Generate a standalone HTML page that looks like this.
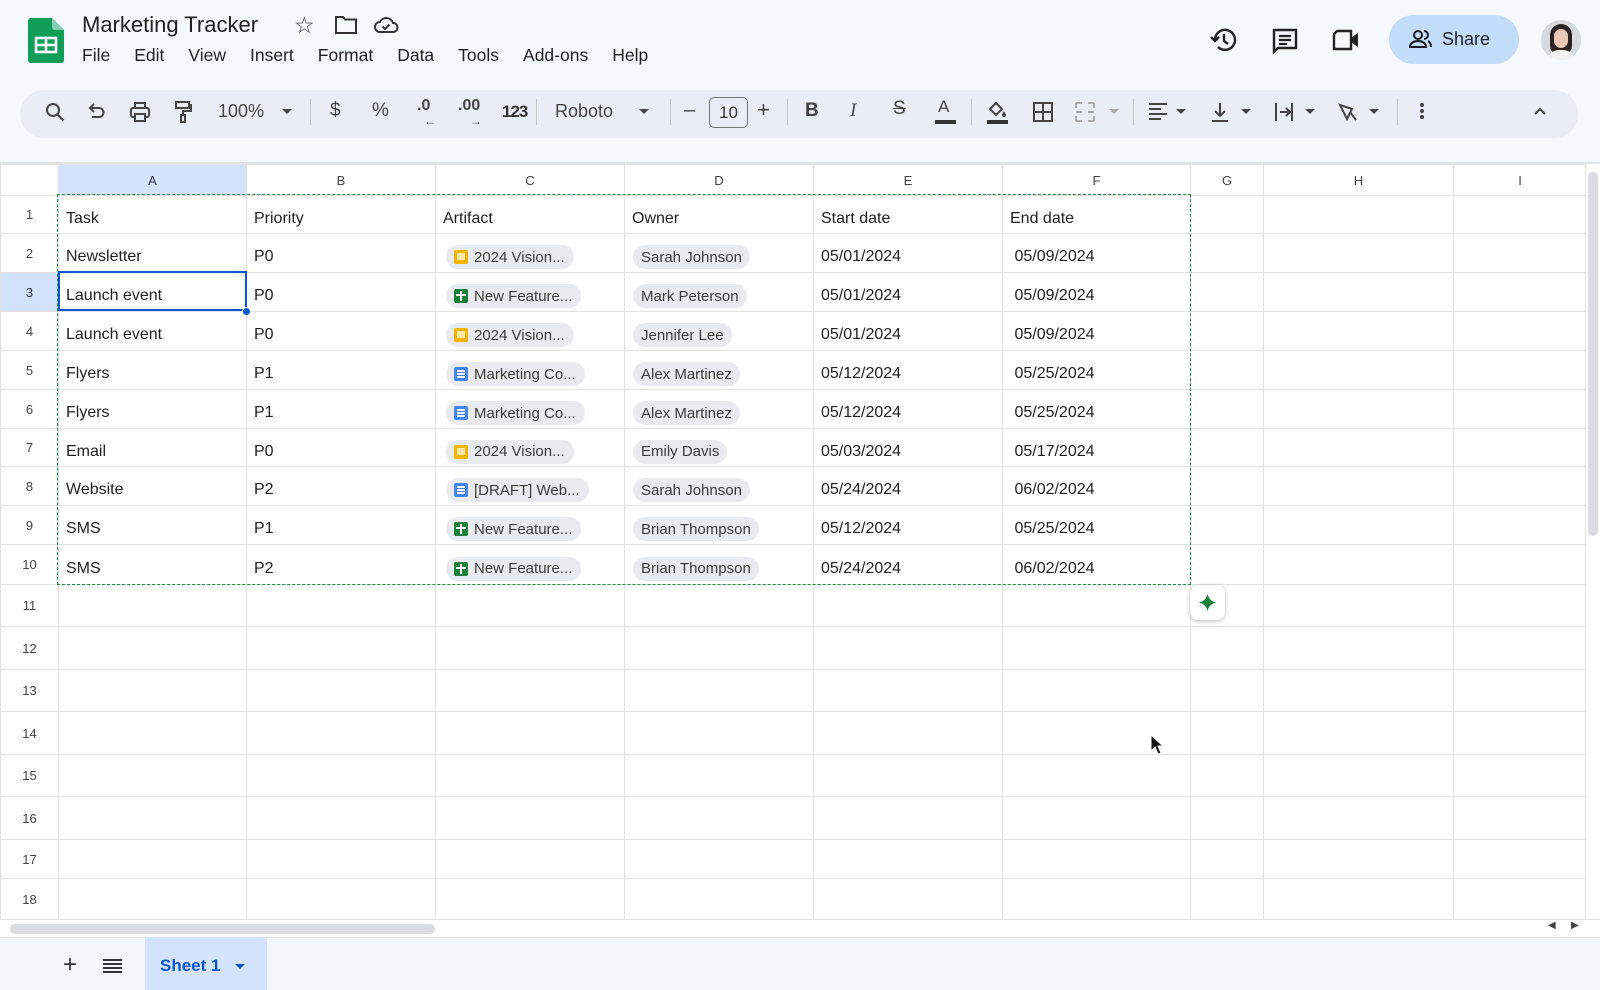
<!DOCTYPE html>
<html><head><meta charset="utf-8">
<style>
*{box-sizing:border-box;margin:0;padding:0}
body{width:1600px;height:990px;overflow:hidden;background:#f5f8fc;font-family:"Liberation Sans",Arial,sans-serif;color:#1f1f1f;position:relative}
.a{position:absolute}
.menu span{margin-right:24px}
.tb{position:absolute;top:90px;left:20px;width:1558px;height:48px;background:#e9eef6;border-radius:24px}
.ic{position:absolute;top:100px;width:24px;height:24px}
.sep{position:absolute;top:99px;width:1px;height:26px;background:#c4c7c5}
.car{position:absolute;top:109px;width:0;height:0;border-left:5px solid transparent;border-right:5px solid transparent;border-top:5px solid #444}
table{position:absolute;left:0;top:164px;border-collapse:collapse;table-layout:fixed;background:#fff}
td{border:1px solid #e1e3e1;font-size:16px;padding:8px 0 0 7px;white-space:nowrap;overflow:hidden;vertical-align:middle}
td.rh{text-align:center;padding:0;font-size:13px;color:#444;background:#fff}
tr.hd td{text-align:center;padding:0;font-size:13px;color:#444;height:31px}
.chip{display:inline-flex;align-items:center;height:24px;background:#e8eaed;border-radius:12px;padding:0 9px 0 8px;font-size:15px;color:#3c3c3c;margin-left:3px}
.chip i{display:inline-block;width:14px;height:14px;border-radius:2px;margin-right:6px;position:relative}
.sl{background:#f4b400}.sl:after{content:"";position:absolute;left:3px;top:3px;width:8px;height:7px;background:#fde9a8}
.sh{background:#188038}.sh:after{content:"";position:absolute;left:6px;top:2px;width:2px;height:10px;background:#fff}.sh:before{content:"";position:absolute;left:2px;top:5px;width:10px;height:2px;background:#fff;z-index:1}
.dc{background:#4285f4}.dc:after{content:"";position:absolute;left:3px;top:3px;width:8px;height:2px;background:#fff;box-shadow:0 3px 0 #fff,0 6px 0 #fff}
.own{display:inline-flex;align-items:center;height:24px;background:#e8eaed;border-radius:12px;padding:0 8px;font-size:15px;color:#3c3c3c;margin-left:1px}
</style></head><body>

<svg class="a" style="left:28px;top:18px" width="36" height="45" viewBox="0 0 36 45"><path d="M3 0h21l12 12v30a3 3 0 0 1-3 3H3a3 3 0 0 1-3-3V3a3 3 0 0 1 3-3z" fill="#0f9d58"/><path d="M24 0l12 12H27a3 3 0 0 1-3-3z" fill="#87ceac"/><rect x="8" y="20" width="20" height="14" fill="none" stroke="#fff" stroke-width="2.6"/><path d="M18 20v14M8 27h20" stroke="#fff" stroke-width="2.6"/></svg>
<div class="a" style="left:82px;top:12px;font-size:22px;color:#1f1f1f">Marketing Tracker</div>
<div class="a" style="left:294px;top:12px;font-size:23px;color:#333">☆</div>
<svg class="a" style="left:334px;top:15px" width="24" height="20" viewBox="0 0 24 20"><path d="M2 2h7l2 2.5h11V18H2z" fill="none" stroke="#333" stroke-width="2"/></svg>
<svg class="a" style="left:373px;top:14px" width="26" height="22" viewBox="0 0 26 22"><path d="M7 18a5 5 0 0 1 0-10 7 7 0 0 1 13 1 4.5 4.5 0 0 1 0 9z" fill="none" stroke="#333" stroke-width="2"/><path d="M9.5 12.5l2.5 2.5 4.5-4.5" fill="none" stroke="#333" stroke-width="2"/></svg>
<div class="a menu" style="left:82px;top:45px;font-size:17.5px;color:#1f1f1f"><span>File</span><span>Edit</span><span>View</span><span>Insert</span><span>Format</span><span>Data</span><span>Tools</span><span>Add-ons</span><span>Help</span></div>

<svg class="a" style="left:1210px;top:26px" width="28" height="28" viewBox="0 0 28 28"><path d="M5 14a10 10 0 1 1 3 7" fill="none" stroke="#222" stroke-width="2.4"/><path d="M1 11l4 4 4-4" fill="none" stroke="#222" stroke-width="2.4"/><path d="M14 8v7l4 3" fill="none" stroke="#222" stroke-width="2.4"/></svg>
<svg class="a" style="left:1271px;top:27px" width="28" height="28" viewBox="0 0 28 28"><path d="M3 3h22v18H7l-4 4z" fill="none" stroke="#222" stroke-width="2.4"/><path d="M8 9h12M8 13h12M8 17h8" stroke="#222" stroke-width="2.2"/></svg>
<svg class="a" style="left:1331px;top:28px" width="30" height="24" viewBox="0 0 30 24"><path d="M6 3h14v18H3V6z" fill="none" stroke="#222" stroke-width="2.4"/><path d="M21 9l6-4v14l-6-4z" fill="#222"/></svg>
<div class="a" style="left:1389px;top:15px;width:130px;height:49px;background:#c2dcfa;border-radius:25px"></div>
<svg class="a" style="left:1409px;top:29px" width="24" height="20" viewBox="0 0 24 20"><circle cx="9" cy="6" r="4" fill="none" stroke="#1f1f1f" stroke-width="2"/><path d="M1 18c0-4 4-6 8-6s8 2 8 6z" fill="none" stroke="#1f1f1f" stroke-width="2"/><path d="M15 2a4 4 0 0 1 0 8M19 12c2 1 3 3 3 6" fill="none" stroke="#1f1f1f" stroke-width="2"/></svg>
<div class="a" style="left:1442px;top:29px;font-size:18px;color:#1f1f1f">Share</div>
<div class="a" style="left:1541px;top:20px;width:40px;height:40px;border-radius:50%;background:#d6dadf;overflow:hidden"><div class="a" style="left:9px;top:4px;width:22px;height:30px;border-radius:11px 11px 8px 8px;background:#2b2422"></div><div class="a" style="left:13px;top:9px;width:14px;height:19px;border-radius:7px;background:#e9c9b5"></div><div class="a" style="left:6px;top:30px;width:28px;height:14px;border-radius:12px 12px 0 0;background:#f2f2f2"></div></div>

<div class="tb"></div>
<svg class="ic" style="left:43px" viewBox="0 0 24 24"><circle cx="10" cy="10" r="6" fill="none" stroke="#444" stroke-width="2"/><path d="M14.5 14.5l6 6" stroke="#444" stroke-width="2.2"/></svg>
<svg class="ic" style="left:84px" viewBox="0 0 24 24"><path d="M8 8h7a4.5 4.5 0 0 1 0 9H8" fill="none" stroke="#444" stroke-width="2"/><path d="M10 4L6 8l4 4" fill="none" stroke="#444" stroke-width="2"/></svg>
<svg class="ic" style="left:128px" viewBox="0 0 24 24"><rect x="3" y="8" width="18" height="9" rx="2" fill="none" stroke="#444" stroke-width="2"/><rect x="7" y="3" width="10" height="5" fill="none" stroke="#444" stroke-width="2"/><rect x="7" y="14" width="10" height="7" fill="#e9eef6" stroke="#444" stroke-width="2"/></svg>
<svg class="ic" style="left:171px" viewBox="0 0 24 24"><rect x="5" y="2" width="13" height="6" fill="none" stroke="#444" stroke-width="2"/><path d="M18 5h2v6h-8v4" fill="none" stroke="#444" stroke-width="2"/><rect x="10" y="15" width="4" height="7" fill="none" stroke="#444" stroke-width="2"/></svg>
<div class="a" style="left:218px;top:101px;font-size:18px;color:#444">100%</div>
<div class="car" style="left:282px"></div>
<div class="sep" style="left:310px"></div>
<div class="a" style="left:330px;top:100px;font-size:19px;color:#444">$</div>
<div class="a" style="left:372px;top:100px;font-size:19px;color:#444">%</div>
<div class="a" style="left:417px;top:97px;font-size:16px;color:#444;font-weight:bold">.0</div><div class="a" style="left:424px;top:114px;font-size:12px;color:#444">←</div>
<div class="a" style="left:458px;top:97px;font-size:16px;color:#444;font-weight:bold">.00</div><div class="a" style="left:470px;top:114px;font-size:12px;color:#444">→</div>
<div class="a" style="left:502px;top:102px;font-size:17px;color:#333;font-weight:bold;letter-spacing:-1px">123</div>
<div class="sep" style="left:536px"></div>
<div class="a" style="left:555px;top:101px;font-size:18px;color:#444">Roboto</div>
<div class="car" style="left:639px"></div>
<div class="sep" style="left:670px"></div>
<div class="a" style="left:684px;top:99px;font-size:20px;color:#444">–</div>
<div class="a" style="left:709px;top:97px;width:39px;height:31px;border:1px solid #747775;border-radius:5px;text-align:center;line-height:29px;font-size:17px;color:#333">10</div>
<div class="a" style="left:757px;top:97px;font-size:22px;color:#444">+</div>
<div class="sep" style="left:787px"></div>
<div class="a" style="left:805px;top:100px;font-size:19px;color:#444;font-weight:bold">B</div>
<div class="a" style="left:850px;top:100px;font-size:19px;color:#444;font-style:italic;font-family:'Liberation Serif',serif">I</div>
<div class="a" style="left:893px;top:98px;font-size:19px;color:#444;text-decoration:line-through">S</div>
<div class="a" style="left:938px;top:97px;font-size:17px;color:#444">A</div><div class="a" style="left:935px;top:120px;width:21px;height:4px;background:#333"></div>
<div class="sep" style="left:971px"></div>
<svg class="ic" style="left:985px;top:99px" viewBox="0 0 24 24"><path d="M5 10l6-6 6 6-6 6z" fill="none" stroke="#444" stroke-width="2"/><path d="M19 12c1 2 2 3 2 4a2 2 0 0 1-4 0c0-1 1-2 2-4z" fill="#444"/></svg><div class="a" style="left:987px;top:120px;width:21px;height:4px;background:#333"></div>
<svg class="ic" style="left:1031px" viewBox="0 0 24 24"><rect x="3" y="3" width="18" height="18" fill="none" stroke="#444" stroke-width="2"/><path d="M12 3v18M3 12h18" stroke="#444" stroke-width="2"/></svg>
<svg class="ic" style="left:1073px" viewBox="0 0 24 24"><path d="M3 3h6M15 3h6M3 21h6M15 21h6M3 3v5M3 16v5M21 3v5M21 16v5M3 12h6M15 12h6" stroke="#aaa" stroke-width="2" fill="none"/></svg>
<div class="car" style="left:1109px;border-top-color:#aaa"></div>
<div class="sep" style="left:1133px"></div>
<svg class="ic" style="left:1146px" viewBox="0 0 24 24"><path d="M3 4h18M3 9h12M3 14h18M3 19h12" stroke="#444" stroke-width="2"/></svg>
<div class="car" style="left:1176px"></div>
<svg class="ic" style="left:1208px" viewBox="0 0 24 24"><path d="M12 3v13M7 11l5 5 5-5M4 21h16" stroke="#444" stroke-width="2" fill="none"/></svg>
<div class="car" style="left:1241px"></div>
<svg class="ic" style="left:1272px" viewBox="0 0 24 24"><path d="M4 3v18M8 12h10M14 8l4 4-4 4M20 3v18" stroke="#444" stroke-width="2" fill="none"/></svg>
<div class="car" style="left:1305px"></div>
<svg class="ic" style="left:1337px" viewBox="0 0 24 24"><path d="M3 5l12 4-5 10zM13 12l6 8" stroke="#444" stroke-width="2" fill="none"/></svg>
<div class="car" style="left:1369px"></div>
<div class="sep" style="left:1397px"></div>
<div class="a" style="left:1420px;top:103px;width:4px;height:4px;border-radius:2px;background:#444;box-shadow:0 6px 0 #444,0 12px 0 #444"></div>
<svg class="ic" style="left:1528px" viewBox="0 0 24 24"><path d="M7 14l5-5 5 5" stroke="#444" stroke-width="2" fill="none"/></svg>

<div class="a" style="left:0;top:162px;width:1600px;height:2px;background:#e2e2e2"></div>
<table>
<colgroup><col style="width:58px"><col style="width:188px"><col style="width:189px"><col style="width:189px"><col style="width:189px"><col style="width:189px"><col style="width:188px"><col style="width:73px"><col style="width:190px"><col style="width:133px"></colgroup>
<tr class="hd"><td class="rh"></td><td style="background:#d3e3fd;color:#333">A</td><td>B</td><td>C</td><td>D</td><td>E</td><td>F</td><td>G</td><td>H</td><td>I</td></tr>
<tr style="height:38px"><td class="rh">1</td><td>Task</td><td>Priority</td><td>Artifact</td><td>Owner</td><td>Start date</td><td>End date</td><td></td><td></td><td></td></tr>
<tr style="height:39px"><td class="rh">2</td><td>Newsletter</td><td>P0</td><td><span class="chip"><i class="sl"></i>2024 Vision...</span></td><td><span class="own">Sarah Johnson</span></td><td>05/01/2024</td><td>&nbsp;05/09/2024</td><td></td><td></td><td></td></tr>
<tr style="height:39px"><td class="rh" style="background:#d3e3fd;color:#333">3</td><td>Launch event</td><td>P0</td><td><span class="chip"><i class="sh"></i>New Feature...</span></td><td><span class="own">Mark Peterson</span></td><td>05/01/2024</td><td>&nbsp;05/09/2024</td><td></td><td></td><td></td></tr>
<tr style="height:39px"><td class="rh">4</td><td>Launch event</td><td>P0</td><td><span class="chip"><i class="sl"></i>2024 Vision...</span></td><td><span class="own">Jennifer Lee</span></td><td>05/01/2024</td><td>&nbsp;05/09/2024</td><td></td><td></td><td></td></tr>
<tr style="height:39px"><td class="rh">5</td><td>Flyers</td><td>P1</td><td><span class="chip"><i class="dc"></i>Marketing Co...</span></td><td><span class="own">Alex Martinez</span></td><td>05/12/2024</td><td>&nbsp;05/25/2024</td><td></td><td></td><td></td></tr>
<tr style="height:39px"><td class="rh">6</td><td>Flyers</td><td>P1</td><td><span class="chip"><i class="dc"></i>Marketing Co...</span></td><td><span class="own">Alex Martinez</span></td><td>05/12/2024</td><td>&nbsp;05/25/2024</td><td></td><td></td><td></td></tr>
<tr style="height:38px"><td class="rh">7</td><td>Email</td><td>P0</td><td><span class="chip"><i class="sl"></i>2024 Vision...</span></td><td><span class="own">Emily Davis</span></td><td>05/03/2024</td><td>&nbsp;05/17/2024</td><td></td><td></td><td></td></tr>
<tr style="height:39px"><td class="rh">8</td><td>Website</td><td>P2</td><td><span class="chip"><i class="dc"></i>[DRAFT] Web...</span></td><td><span class="own">Sarah Johnson</span></td><td>05/24/2024</td><td>&nbsp;06/02/2024</td><td></td><td></td><td></td></tr>
<tr style="height:39px"><td class="rh">9</td><td>SMS</td><td>P1</td><td><span class="chip"><i class="sh"></i>New Feature...</span></td><td><span class="own">Brian Thompson</span></td><td>05/12/2024</td><td>&nbsp;05/25/2024</td><td></td><td></td><td></td></tr>
<tr style="height:40px"><td class="rh">10</td><td>SMS</td><td>P2</td><td><span class="chip"><i class="sh"></i>New Feature...</span></td><td><span class="own">Brian Thompson</span></td><td>05/24/2024</td><td>&nbsp;06/02/2024</td><td></td><td></td><td></td></tr>
<tr style="height:42px"><td class="rh">11</td><td></td><td></td><td></td><td></td><td></td><td></td><td></td><td></td><td></td></tr>
<tr style="height:43px"><td class="rh">12</td><td></td><td></td><td></td><td></td><td></td><td></td><td></td><td></td><td></td></tr>
<tr style="height:42px"><td class="rh">13</td><td></td><td></td><td></td><td></td><td></td><td></td><td></td><td></td><td></td></tr>
<tr style="height:43px"><td class="rh">14</td><td></td><td></td><td></td><td></td><td></td><td></td><td></td><td></td><td></td></tr>
<tr style="height:42px"><td class="rh">15</td><td></td><td></td><td></td><td></td><td></td><td></td><td></td><td></td><td></td></tr>
<tr style="height:43px"><td class="rh">16</td><td></td><td></td><td></td><td></td><td></td><td></td><td></td><td></td><td></td></tr>
<tr style="height:39px"><td class="rh">17</td><td></td><td></td><td></td><td></td><td></td><td></td><td></td><td></td><td></td></tr>
<tr style="height:41px"><td class="rh">18</td><td></td><td></td><td></td><td></td><td></td><td></td><td></td><td></td><td></td></tr>
</table>

<div class="a" style="left:57px;top:194px;width:1134px;height:391px;border:1.5px dashed #1e8e3e"></div>
<div class="a" style="left:58px;top:271px;width:189px;height:40px;border:2px solid #0b57d0"></div>
<div class="a" style="left:242px;top:307px;width:9px;height:9px;border-radius:50%;background:#0b57d0;border:1px solid #fff"></div>

<div class="a" style="left:1190px;top:585px;width:35px;height:35px;background:#fff;border-radius:8px;box-shadow:0 1px 4px rgba(0,0,0,.3)"></div>
<svg class="a" style="left:1197px;top:592px" width="21" height="21" viewBox="0 0 24 24"><path d="M12 2c1 5 4 9 10 10-6 1-9 5-10 10-1-5-4-9-10-10 6-1 9-5 10-10z" fill="#188038"/></svg>
<svg class="a" style="left:1150px;top:734px" width="14" height="22" viewBox="0 0 14 22"><path d="M1 1v16l4-4 3 7 3-1-3-7h5z" fill="#111" stroke="#fff" stroke-width="1"/></svg>

<div class="a" style="left:1585px;top:164px;width:15px;height:755px;background:#fff;border-left:1px solid #e1e3e1"></div>
<div class="a" style="left:1588px;top:172px;width:10px;height:364px;background:#dadce0;border-radius:5px"></div>
<div class="a" style="left:0;top:919px;width:1600px;height:18px;background:#fff;border-top:1px solid #e1e3e1"></div>
<div class="a" style="left:10px;top:924px;width:425px;height:10px;background:#dadce0;border-radius:5px"></div>
<div class="a" style="left:1548px;top:920px;font-size:10px;color:#444">◀</div>
<div class="a" style="left:1571px;top:920px;font-size:10px;color:#444">▶</div>

<div class="a" style="left:0;top:937px;width:1600px;height:53px;background:#f3f6fb;border-top:1px solid #e1e3e1"></div>
<div class="a" style="left:63px;top:951px;font-size:24px;color:#333">+</div>
<div class="a" style="left:103px;top:959px;width:19px;height:2px;background:#333;box-shadow:0 4px 0 #333,0 8px 0 #333,0 12px 0 #333"></div>
<div class="a" style="left:145px;top:937px;width:122px;height:53px;background:#d3e3fd"></div>
<div class="a" style="left:160px;top:956px;font-size:17px;color:#0b57d0;font-weight:bold">Sheet 1</div>
<div class="car" style="left:235px;top:964px;border-top-color:#0b57d0"></div>
</body></html>
